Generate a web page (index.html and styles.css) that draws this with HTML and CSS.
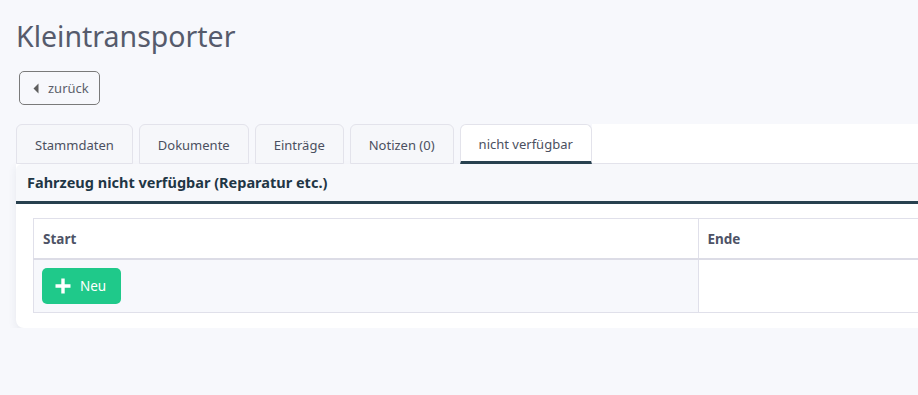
FILE: index.html
```html
<!DOCTYPE html>
<html lang="de">
<head>
    <meta charset="UTF-8">
    <meta name="viewport" content="width=device-width, initial-scale=1.0">
    <title>Kleintransporter</title>
    <link rel="stylesheet" href="styles.css">
</head>
<body>
<div class="page">
    <h1 class="page-title">Kleintransporter</h1>

    <a class="btn-back" href="#">
        <svg class="btn-back-icon" width="6" height="11" viewBox="0 0 6 11"><path d="M5.5 0.5 L0.5 5.5 L5.5 10.5 Z" fill="#5e5e5e"/></svg>
        zurück
    </a>

    <div class="tabs">
        <div class="tab">Stammdaten</div>
        <div class="tab">Dokumente</div>
        <div class="tab">Einträge</div>
        <div class="tab">Notizen (0)</div>
        <div class="tab active">nicht verfügbar</div>
        <div class="tab-filler"></div>
    </div>

    <div class="card">
        <div class="card-head">Fahrzeug nicht verfügbar (Reparatur etc.)</div>
        <div class="card-body">
            <table class="list">
                <thead>
                    <tr>
                        <th>Start</th>
                        <th>Ende</th>
                    </tr>
                </thead>
                <tbody>
                    <tr>
                        <td class="cell-new">
                            <button class="btn-new">
                                <svg width="16" height="16" viewBox="0 0 16 16"><path d="M8 0.5 V15.5 M0.5 8 H15.5" stroke="#fff" stroke-width="3.4"/></svg>
                                Neu
                            </button>
                        </td>
                        <td></td>
                    </tr>
                </tbody>
            </table>
        </div>
    </div>
</div>
</body>
</html>
```

FILE: styles.css
```css
html, body {
    margin: 0;
    padding: 0;
    overflow: hidden;
}
body {
    background: #f7f8fc;
    font-family: "Noto Sans", "Open Sans", sans-serif;
    color: #4b5060;
}
.page {
    width: 1400px;
    padding: 0 16px;
}
.page-title {
    margin: 0;
    padding-top: 14px;
    font-size: 28.5px;
    font-weight: 400;
    line-height: 44px;
    color: #565b6c;
}
.btn-back {
    display: inline-flex;
    align-items: center;
    gap: 9px;
    margin: 13px 0 0 3px;
    height: 34px;
    width: 81px;
    box-sizing: border-box;
    padding: 0 13px;
    border: 1px solid #7a7a7a;
    border-radius: 5px;
    font-size: 13px;
    color: #5b5f6b;
    text-decoration: none;
}
.btn-back-icon {
    flex-shrink: 0;
    width: 6px;
    height: 11px;
}
.tabs {
    display: flex;
    gap: 6px;
    margin-top: 19px;
    width: 1364px;
}
.tab {
    height: 40px;
    line-height: 40px;
    padding: 0 18px;
    box-sizing: border-box;
    background: #f6f7fa;
    border: 1px solid #e3e3eb;
    border-radius: 6px 6px 0 0;
    font-size: 13px;
    color: #4b5060;
}
.tab.active {
    background: #fff;
    border-bottom: 3px solid #28414f;
    line-height: 38px;
}
.tab-filler {
    flex: 1;
    background: #fff;
    border-bottom: 1px solid #e3e3eb;
    margin-left: -6px;
}
.card {
    width: 1364px;
    background: #fff;
    border-radius: 0 0 8px 8px;
    box-shadow: 0 3px 8px rgba(40, 50, 80, 0.08);
}
.card-head {
    height: 37px;
    line-height: 36px;
    padding: 0 11px;
    background: #f7f8fb;
    border-radius: 6px 0 0 0;
    border-bottom: 3px solid #28414f;
    font-size: 14.5px;
    font-weight: 700;
    color: #1f3645;
}
.card-body {
    padding: 14px 17px 15px;
}
.list {
    width: 1330px;
    border-collapse: collapse;
    table-layout: fixed;
}
.list th {
    height: 39px;
    text-align: left;
    padding: 0 9px;
    font-size: 13.5px;
    font-weight: 700;
    color: #4e5366;
    border: 1px solid #e0e0ea;
    border-bottom: 2px solid #dcdce6;
}
.list td {
    height: 52px;
    padding: 0 8px;
    border: 1px solid #e0e0ea;
}
.list td.cell-new {
    background: #f7f8fc;
}
.btn-new {
    display: inline-flex;
    align-items: center;
    gap: 9px;
    height: 36px;
    width: 79px;
    padding: 0 13px;
    border: none;
    border-radius: 5px;
    background: #1fc98a;
    color: #fff;
    font-family: inherit;
    font-size: 13.5px;
    cursor: pointer;
}
```
